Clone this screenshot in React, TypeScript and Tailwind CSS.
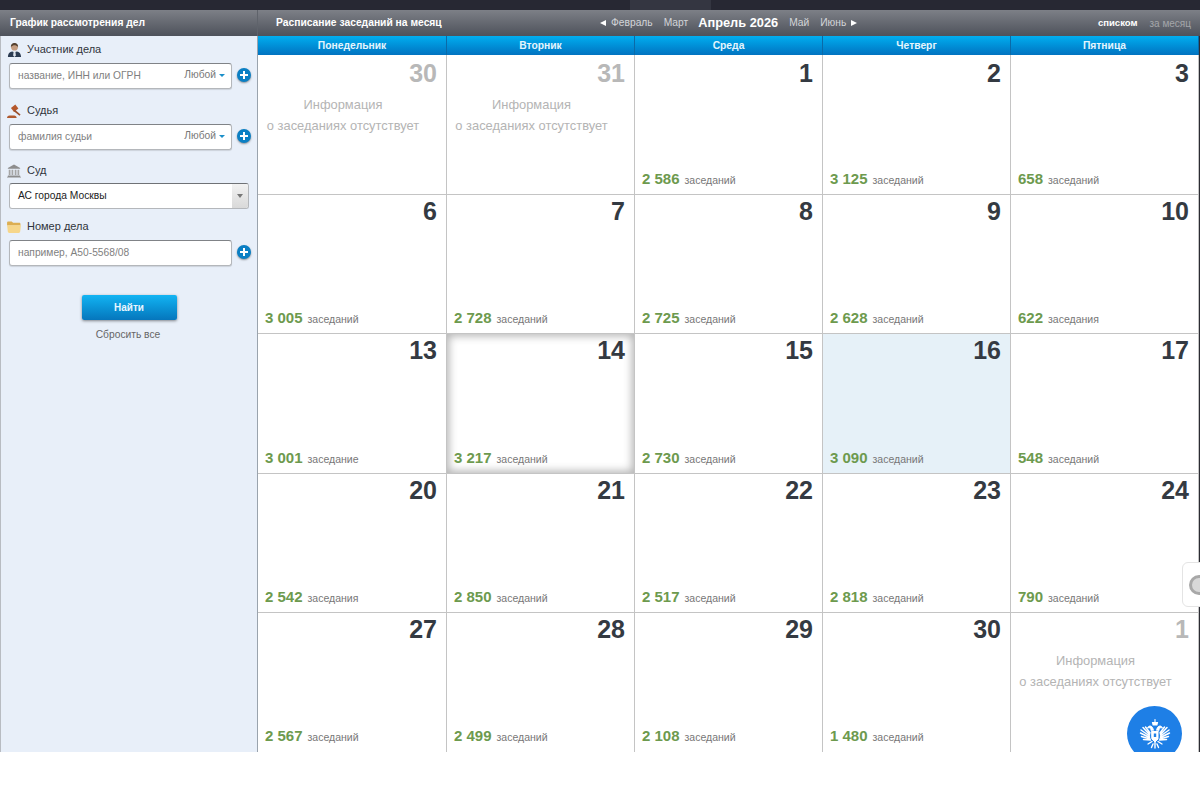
import React from "react";

type Day = {
  num: number;
  count?: string;
  label?: string;
  muted?: boolean;
  selected?: boolean;
  today?: boolean;
};

const weekDays = ["Понедельник", "Вторник", "Среда", "Четверг", "Пятница"];

const days: Day[] = [
  { num: 30, muted: true },
  { num: 31, muted: true },
  { num: 1, count: "2 586", label: "заседаний" },
  { num: 2, count: "3 125", label: "заседаний" },
  { num: 3, count: "658", label: "заседаний" },
  { num: 6, count: "3 005", label: "заседаний" },
  { num: 7, count: "2 728", label: "заседаний" },
  { num: 8, count: "2 725", label: "заседаний" },
  { num: 9, count: "2 628", label: "заседаний" },
  { num: 10, count: "622", label: "заседания" },
  { num: 13, count: "3 001", label: "заседание" },
  { num: 14, count: "3 217", label: "заседаний", selected: true },
  { num: 15, count: "2 730", label: "заседаний" },
  { num: 16, count: "3 090", label: "заседаний", today: true },
  { num: 17, count: "548", label: "заседаний" },
  { num: 20, count: "2 542", label: "заседания" },
  { num: 21, count: "2 850", label: "заседаний" },
  { num: 22, count: "2 517", label: "заседаний" },
  { num: 23, count: "2 818", label: "заседаний" },
  { num: 24, count: "790", label: "заседаний" },
  { num: 27, count: "2 567", label: "заседаний" },
  { num: 28, count: "2 499", label: "заседаний" },
  { num: 29, count: "2 108", label: "заседаний" },
  { num: 30, count: "1 480", label: "заседаний" },
  { num: 1, muted: true },
];

const PersonIcon = () => (
  <svg width="15" height="15" viewBox="0 0 16 16">
    <path d="M1 16c0-4 2-5.500 4.500-6L8 11l2.500-1c2.500.5 4.500 2 4.500 6z" fill="#2b3b52" />
    <path d="M7 10.500h2l.5 4-1.500 1.500-1.500-1.500z" fill="#dfe6ee" />
    <circle cx="8" cy="5.500" r="3.600" fill="#c49c80" />
    <path d="M4.200 5.500C4 2 6 1 8 1s4 1 3.800 4.500C11 4 9 3.500 8 3.500S5 4 4.200 5.500z" fill="#54402f" />
  </svg>
);

const GavelIcon = () => (
  <svg width="14" height="14" viewBox="0 0 16 16">
    <path d="M4.500 4.500 9.500 0.500 13 5 8 9z" fill="#b5582c" />
    <path d="M9 6.500 15.500 12l-1.200 1.400L7.500 8z" fill="#9a4f2c" />
    <path d="M0 16c0-2 1.200-3 2.800-3h5.400c1.600 0 2.800 1 2.800 3z" fill="#b05a30" />
  </svg>
);

const BankIcon = () => (
  <svg width="14" height="14" viewBox="0 0 16 15" fill="#8d8d8d">
    <path d="M8 0 15 4v1H1V4z" />
    <path d="M2 6h2v6H2zM5.200 6h2v6h-2zM8.800 6h2v6h-2zM12 6h2v6h-2z" fill="#a5a5a5" />
    <path d="M1 12.500h14V14H1zM0 14h16v1H0z" />
  </svg>
);

const FolderIcon = () => (
  <svg width="14" height="12" viewBox="0 0 15 13">
    <path d="M0 2c0-1 .5-1.500 1.500-1.500H5L6.500 2H13c1 0 1.500.5 1.500 1.500V5H0z" fill="#dcae52" />
    <path d="M0 4.500h15l-.8 7c-.1 1-.7 1.500-1.700 1.500h-10C1.500 13 .9 12.500.8 11.500z" fill="#f6d68a" />
  </svg>
);

const PlusButton = () => (
  <span className="flex h-[14px] w-[14px] shrink-0 items-center justify-center rounded-full bg-[#0a7fc4] shadow-[0_1px_2px_rgba(0,0,0,0.4)]">
    <svg width="10" height="10" viewBox="0 0 10 10">
      <path d="M4 1h2v3h3v2H6v3H4V6H1V4h3z" fill="#fff" />
    </svg>
  </span>
);

const Eagle = () => (
  <svg width="32" height="30" viewBox="0 0 32 30" fill="none" stroke="#fff" strokeLinecap="round">
    {/* crown */}
    <path d="M16 0.500v2.500M13.500 3.500h5l-.6 2.500h-3.800z" strokeWidth="1.100" fill="#fff" />
    {/* heads */}
    <path d="M14.500 11c-.5-2.500-2-4.500-4-4-1 .2-1.600 1-2 2l2-.2c1 .6 1.500 1.700 1.800 3.200z" fill="#fff" strokeWidth="0.800" />
    <path d="M17.500 11c.5-2.500 2-4.500 4-4 1 .2 1.600 1 2 2l-2-.2c-1 .6-1.500 1.700-1.800 3.200z" fill="#fff" strokeWidth="0.800" />
    {/* left wing */}
    <path d="M11 14 6.500 8M10.500 15.500 4 8.500M10.500 17 2 11M10.500 18.500 1.500 14M11 20 2.500 17.500M11.500 21 4.500 20.500" strokeWidth="1.500" />
    {/* right wing */}
    <path d="M21 14l4.500-6M21.500 15.500l6.500-7M21.500 17l8.500-6M21.500 18.500l9-4.500M21 20l8.500-2.500M20.500 21l7-.5" strokeWidth="1.500" />
    {/* body with shield */}
    <path d="M13 12.500h6v7.500l-3 3-3-3z" fill="#fff" strokeWidth="1" />
    <path d="M14.800 14.500h2.400v3.500h-2.400z" fill="#1e7fe6" stroke="none" />
    {/* legs and tail */}
    <path d="M13 22.500 9 25M19 22.500l4 2.500M16 23v6M14 25l-1.500 3.500M18 25l1.500 3.500" strokeWidth="1.400" />
  </svg>
);

const AnyLabel = () => (
  <span className="-mt-[2px] flex items-center gap-[3px] text-[10.250px] text-[#777]">
    Любой
    <span className="h-0 w-0 border-x-[3.500px] border-t-[3.500px] border-x-transparent border-t-[#1b8fc9]" />
  </span>
);

const FieldLabel = ({ icon, text }: { icon: React.ReactNode; text: string }) => (
  <div className="flex h-[16px] items-center pb-[1px]">
    <span className="flex w-[26px] justify-start pl-[6px]">{icon}</span>
    <span className="text-[11px] text-[#30353c]">{text}</span>
  </div>
);

const TextField = ({ placeholder, any }: { placeholder: string; any?: boolean }) => (
  <div className="mt-[5px] flex items-center pl-[8px]">
    <div className="flex h-[26px] w-[223px] items-center justify-between rounded-[3px] border border-[#b4b7bb] border-t-[#808387] bg-white pl-[8px] pr-[6px] shadow-[0_1px_1px_rgba(0,0,0,0.12)]">
      <span className="text-[10.250px] text-[#7f7f7f]">{placeholder}</span>
      {any && <AnyLabel />}
    </div>
    <span className="ml-[5px] -mt-[3px]">
      <PlusButton />
    </span>
  </div>
);

const DayCell = ({ day, index }: { day: Day; index: number }) => {
  const lastRow = index >= 20;
  return (
    <div
      className={`relative flex flex-col border-r border-[#c4c4c4] ${lastRow ? "" : "border-b"} ${
        day.today ? "bg-[#e6f1f8]" : "bg-white"
      } ${day.selected ? "shadow-[inset_0_0_8px_2px_rgba(0,0,0,0.3)]" : ""}`}
    >
      <div
        className={`pr-[9px] text-right text-[25px] font-bold leading-[31px] ${
          index < 5 ? "pt-[3px]" : "pt-[1px]"
        } ${day.muted ? "text-[#b8b8b8]" : "text-[#343a42]"}`}
      >
        {day.num}
      </div>
      {day.muted ? (
        <div className="mt-[5px] pr-[18px] text-center text-[12.900px] leading-[21px] text-[#b4b4b4]">
          <div>Информация</div>
          <div>о заседаниях отсутствует</div>
        </div>
      ) : (
        <div className={`mt-auto flex items-baseline gap-[5px] pl-[7px] ${lastRow ? "pb-[6px]" : "pb-[5px]"}`}>
          <span className="text-[15px] font-bold leading-[18px] text-[#6d9a4e]">{day.count}</span>
          <span className="text-[10.500px] leading-[18px] text-[#777]">{day.label}</span>
        </div>
      )}
    </div>
  );
};

export default function App() {
  return (
    <div className="relative h-[786px] w-[1200px] overflow-hidden bg-white font-['Liberation_Sans',Arial,sans-serif]">
      <div className="h-[752px] overflow-hidden">
        {/* top strip */}
        <div className="h-[10px] bg-[#272833]">
          <div className="ml-[630px] h-full w-[81px] bg-[#343641]" />
        </div>

        {/* header */}
        <div className="flex h-[26px] items-center bg-gradient-to-b from-[#7d8087] to-[#4e525b] text-white">
          <div className="flex h-full w-[258px] items-center border-r border-[#5f636b] pl-[10px] text-[10.300px] font-bold">
            График рассмотрения дел
          </div>
          <div className="relative flex h-full flex-1 items-center pl-[18px]">
            <span className="text-[10.300px] font-bold">Расписание заседаний на месяц</span>
            <div className="absolute left-[342px] flex items-center text-[10.250px] text-[#d3d5d9]">
              <span className="mr-[5px] h-0 w-0 border-y-[3.500px] border-r-[6px] border-y-transparent border-r-white" />
              <span>Февраль</span>
              <span className="ml-[11px]">Март</span>
              <span className="ml-[10px] text-[12.800px] font-bold text-white">Апрель 2026</span>
              <span className="ml-[11px]">Май</span>
              <span className="ml-[11px]">Июнь</span>
              <span className="ml-[5px] h-0 w-0 border-y-[3.500px] border-l-[6px] border-y-transparent border-l-white" />
            </div>
            <div className="ml-auto flex items-center gap-[12px] pr-[9px]">
              <span className="text-[9.500px] font-bold">списком</span>
              <span className="text-[10px] text-[#a4a6aa]">за месяц</span>
            </div>
          </div>
        </div>

        <div className="flex h-[716px]">
          {/* sidebar */}
          <aside className="w-[258px] shrink-0 border-l border-r border-l-[#b8bcc2] border-r-[#9aa3ad] bg-[#e8eff9] pt-[6px]">
            <FieldLabel icon={<PersonIcon />} text="Участник дела" />
            <TextField placeholder="название, ИНН или ОГРН" any />
            <div className="mt-[14px]">
              <FieldLabel icon={<GavelIcon />} text="Судья" />
              <TextField placeholder="фамилия судьи" any />
            </div>
            <div className="mt-[13px]">
              <FieldLabel icon={<BankIcon />} text="Суд" />
              <div className="mt-[4px] pl-[8px]">
                <div className="flex h-[26px] w-[240px] items-center justify-between overflow-hidden rounded-[3px] border border-[#b4b7bb] border-t-[#6f7276] bg-white pl-[8px]">
                  <span className="text-[10.250px] text-[#222]">АС города Москвы</span>
                  <span className="flex h-full w-[16px] items-center justify-center bg-gradient-to-b from-[#f2f2f2] to-[#d9d9d9]">
                    <span className="h-0 w-0 border-x-[3px] border-t-[4px] border-x-transparent border-t-[#777]" />
                  </span>
                </div>
              </div>
            </div>
            <div className="mt-[10px]">
              <FieldLabel icon={<FolderIcon />} text="Номер дела" />
              <TextField placeholder="например, А50-5568/08" />
            </div>
            <div className="mt-[29px] flex flex-col items-center">
              <button className="h-[25px] w-[95px] rounded-[2px] bg-gradient-to-b from-[#13b4f3] to-[#0676bc] pb-[1px] text-[10px] font-bold text-[#e8f6ff] shadow-[0_1px_3px_rgba(0,0,0,0.45)]">
                Найти
              </button>
              <span className="mt-[7px] -translate-x-[1px] text-[10.250px] text-[#666]">Сбросить все</span>
            </div>
          </aside>

          {/* calendar */}
          <main className="flex-1 border-r border-[#2b2c33]">
            <div className="grid h-[19px] grid-cols-[189px_188px_188px_188px_188px] bg-gradient-to-b from-[#02aef0] to-[#0273c0]">
              {weekDays.map((name) => (
                <div
                  key={name}
                  className="flex items-center justify-center border-r border-[#0a6aa8] text-[10.300px] font-bold text-[#e4f5fd]"
                >
                  {name}
                </div>
              ))}
            </div>
            <div className="grid grid-cols-[189px_188px_188px_188px_188px] grid-rows-[140px_139px_140px_139px_139px]">
              {days.map((day, i) => (
                <DayCell key={i} day={day} index={i} />
              ))}
            </div>
          </main>
        </div>
      </div>

      {/* side handle */}
      <div className="absolute left-[1182px] top-[562px] h-[45px] w-[20px] rounded-l-[6px] border border-[#e4e4e4] bg-white">
        <span className="absolute left-[6px] top-[12px] block h-[20px] w-[20px] rounded-full border-[3px] border-[#a8a8a8] bg-[#d8d8d8]" />
      </div>

      {/* round emblem, cut by the page end */}
      <div className="absolute left-[1127px] top-[706px] h-[46px] w-[55px] overflow-hidden">
        <div className="flex h-[55px] w-[55px] items-center justify-center rounded-full bg-[#1e7fe6]">
          <Eagle />
        </div>
      </div>
    </div>
  );
}
